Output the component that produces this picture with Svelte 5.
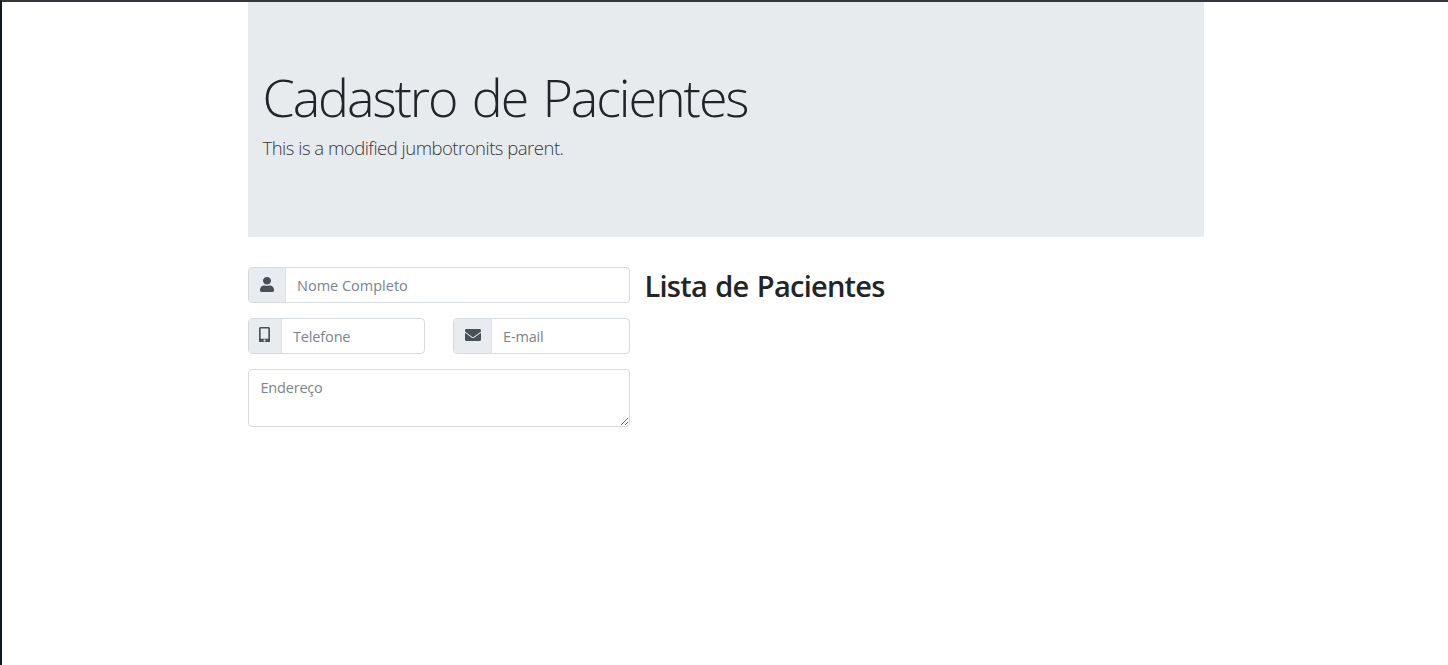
<script>
  let nome = $state('');
  let telefone = $state('');
  let email = $state('');
  let endereco = $state('');
</script>

<div class="page">
  <main class="container">
    <header class="jumbotron">
      <h1><span>Cadastro de Pacientes</span></h1>
      <p><span>This is a modified jumbotronits parent.</span></p>
    </header>

    <div class="row">
      <form autocomplete="off">
        <div class="group">
          <span class="addon user">
            <svg width="14" height="15" viewBox="0 0 448 512" preserveAspectRatio="none"><path d="M224 256c70.700 0 128-57.300 128-128S294.700 0 224 0 96 57.300 96 128s57.300 128 128 128zm89.600 32h-16.700c-22.200 10.200-46.900 16-72.900 16s-50.600-5.800-72.900-16h-16.700C60.200 288 0 348.200 0 422.400V464c0 26.500 21.500 48 48 48h352c26.500 0 48-21.500 48-48v-41.600c0-74.200-60.200-134.400-134.400-134.400z" /></svg>
          </span>
          <input type="text" placeholder="Nome Completo" bind:value={nome} />
        </div>

        <div class="pair">
          <div class="group">
            <span class="addon phone">
              <svg width="11" height="15.500" viewBox="0 0 320 512" preserveAspectRatio="none"><path d="M272 0H48C21.500 0 0 21.500 0 48v416c0 26.500 21.500 48 48 48h224c26.500 0 48-21.500 48-48V48c0-26.500-21.500-48-48-48zM160 480c-17.700 0-32-14.300-32-32s14.300-32 32-32 32 14.300 32 32-14.300 32-32 32zm112-108c0 6.600-5.400 12-12 12H60c-6.600 0-12-5.400-12-12V60c0-6.600 5.400-12 12-12h200c6.600 0 12 5.400 12 12v312z" /></svg>
            </span>
            <input type="text" placeholder="Telefone" bind:value={telefone} />
          </div>
          <div class="group">
            <span class="addon mail">
              <svg width="16" height="16" viewBox="0 0 512 512"><path d="M502.300 190.800c3.900-3.100 9.700-.2 9.700 4.700V400c0 26.500-21.500 48-48 48H48c-26.500 0-48-21.500-48-48V195.600c0-5 5.700-7.800 9.700-4.700 22.400 17.400 52.100 39.500 154.100 113.600 21.100 15.400 56.700 47.800 92.200 47.600 35.700.3 72-32.800 92.300-47.600 102-74.100 131.600-96.300 154-113.700zM256 320c23.200.4 56.600-29.200 73.400-41.400 132.700-96.300 142.800-104.700 173.400-128.700 5.800-4.500 9.200-11.500 9.200-18.900v-19c0-26.500-21.500-48-48-48H48c-26.500 0-48 21.500-48 48v19c0 7.400 3.400 14.300 9.200 18.900 30.600 23.900 40.700 32.400 173.400 128.700 16.800 12.200 50.200 41.800 73.400 41.400z" /></svg>
            </span>
            <input type="text" placeholder="E-mail" bind:value={email} />
          </div>
        </div>

        <textarea rows="2" placeholder="Endereço" bind:value={endereco}></textarea>
      </form>

      <section>
        <h2><span>Lista de Pacientes</span></h2>
      </section>
    </div>
  </main>
</div>

<style>
  :global(body) {
    margin: 0;
    background: #fff;
    overflow: hidden;
  }
  .page {
    box-sizing: border-box;
    height: 665px;
    border-top: 2px solid #35363b;
    border-left: 2px solid #101a23;
    font-family: 'Segoe UI', 'Open Sans', 'Noto Sans', sans-serif;
    color: #212529;
  }
  .container {
    width: 956.5px;
    margin-left: 245.5px;
  }
  .jumbotron {
    box-sizing: border-box;
    height: 234.5px;
    padding: 63px 15px 0;
    background: #e8ebee;
  }
  h1 {
    margin: 0;
    font-size: 52px;
    line-height: 64px;
    font-weight: 300;
    letter-spacing: -2.1px;
    word-spacing: 4px;
    white-space: nowrap;
  }
  p {
    margin: 5px 0 0;
    font-size: 18.5px;
    line-height: 28px;
    font-weight: 300;
    letter-spacing: -0.5px;
    color: #33373b;
  }
  .row {
    display: flex;
    gap: 15px;
    margin-top: 30px;
  }
  form {
    width: 382px;
  }
  .group {
    box-sizing: border-box;
    display: flex;
    height: 36px;
    border: 1px solid #d5dadf;
    border-radius: 4px;
    overflow: hidden;
    background: #fff;
  }
  .addon {
    flex: none;
    box-sizing: border-box;
    display: flex;
    align-items: center;
    justify-content: center;
    padding-bottom: 1px;
    background: #e8ebef;
    border-right: 1px solid #dde1e5;
    fill: #495057;
  }
  .user {
    width: 37px;
  }
  .phone {
    width: 33px;
    padding-bottom: 2px;
  }
  .mail {
    width: 38px;
    padding: 0 0 2px 2px;
  }
  input,
  textarea {
    box-sizing: border-box;
    font: 400 14.5px/22px 'Segoe UI', 'Open Sans', 'Noto Sans', sans-serif;
    color: #495057;
    outline: 0;
  }
  input {
    flex: 1;
    min-width: 0;
    border: 0;
    padding: 2px 11.5px 0;
    background: transparent;
  }
  .pair input {
    padding: 2px 11.5px 0;
    letter-spacing: -0.15px;
  }
  ::placeholder {
    color: #7c838a;
    opacity: 1;
  }
  .pair {
    display: grid;
    grid-template-columns: 177px 177px;
    justify-content: space-between;
    margin: 15px 0;
  }
  textarea {
    display: block;
    width: 382px;
    height: 58.5px;
    padding: 7px 12px;
    border: 1px solid #d5dadf;
    border-radius: 4px;
    letter-spacing: -0.2px;
    resize: vertical;
  }
  h2 {
    margin: 1px 0 0;
    font-size: 29px;
    line-height: 36px;
    font-weight: 600;
    letter-spacing: -0.75px;
    word-spacing: 1.5px;
    white-space: nowrap;
  }
</style>
